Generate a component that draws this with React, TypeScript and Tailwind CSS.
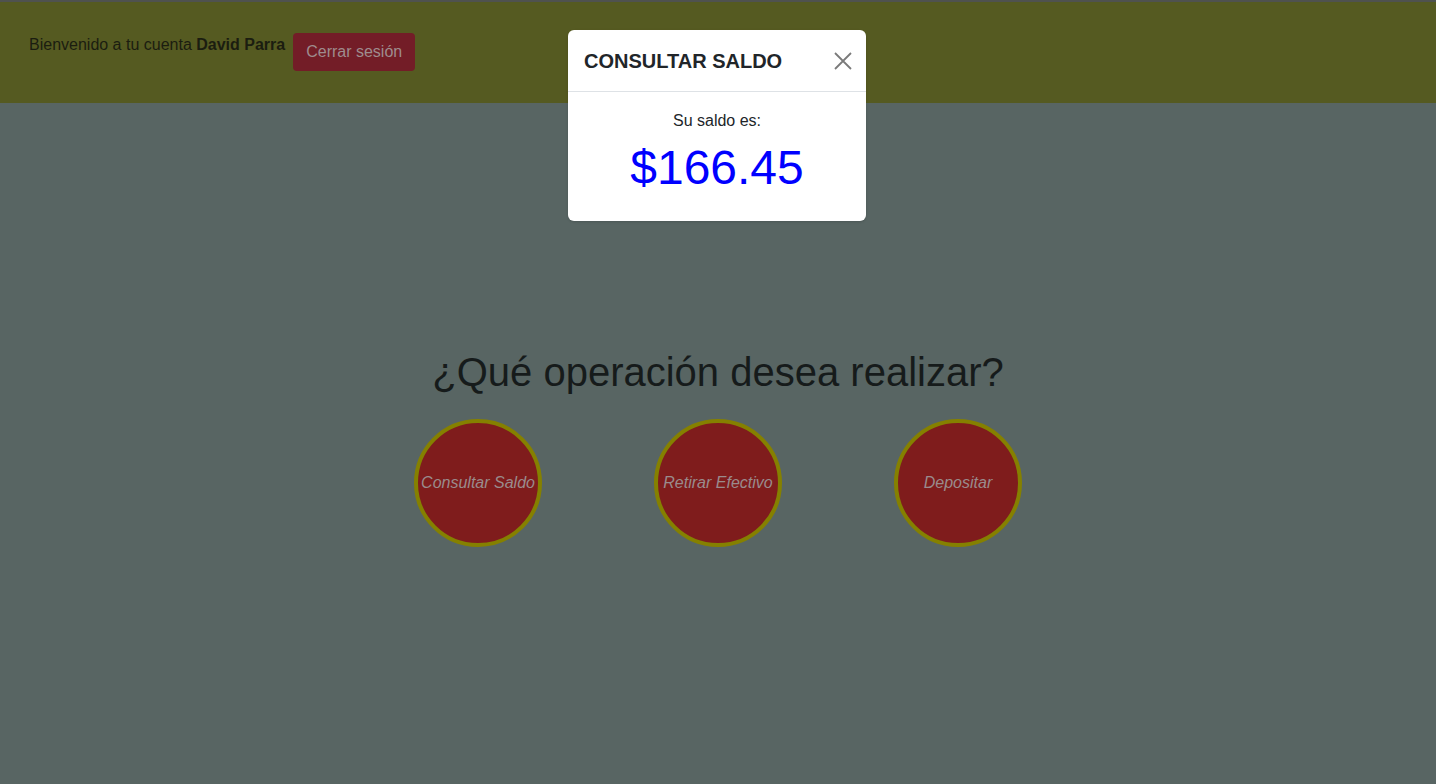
import React from "react";

export default function App() {
  const ops = ["Consultar Saldo", "Retirar Efectivo", "Depositar"];
  return (
    <div
      className="relative w-[1436px] h-[784px] overflow-hidden bg-[#586563]"
      style={{ fontFamily: '"Liberation Sans", Arial, sans-serif' }}
    >
      <div className="border-t-2 border-[#4f524f] bg-[#555a21] h-[103px] flex items-start pl-[29px] pt-[31px]">
        <span className="text-[16px] leading-[24px] text-[#1b1d10]">
          Bienvenido a tu cuenta <b>David Parra</b>
        </span>
        <button className="ml-[8px] h-[38px] px-[13px] rounded-[4px] bg-[#731d27] text-[#9f8c8e] text-[16px] leading-[24px]">
          Cerrar sesión
        </button>
      </div>

      <div className="flex flex-col items-center pt-[245px]">
        <h1 className="text-[40px] leading-[48px] text-[#161b1b]">¿Qué operación desea realizar?</h1>
        <div className="mt-[23px] flex gap-[112px]">
          {ops.map((o) => (
            <div
              key={o}
              className="w-[128px] h-[128px] rounded-full border-[4px] border-[#858000] bg-[#7f1c1c] flex items-center justify-center"
            >
              <span className="italic text-[16px] text-[#9a8b8c] whitespace-nowrap">{o}</span>
            </div>
          ))}
        </div>
      </div>

      <div className="absolute left-[568px] top-[30px] w-[298px] bg-white rounded-[6px] shadow">
        <div className="h-[62px] flex items-center justify-between pl-[16px] pr-[14px] border-b border-[#dee2e6]">
          <span className="font-bold text-[20px] text-[#212529]">CONSULTAR SALDO</span>
          <svg width="18" height="18" viewBox="0 0 18 18" className="mt-[1px]">
            <path d="M1 1 L17 17 M17 1 L1 17" stroke="#7a7a7a" strokeWidth="1.8" />
          </svg>
        </div>
        <div className="flex flex-col items-center pt-[17px] pb-[25px]">
          <span className="text-[16px] leading-[24px] text-[#212529]">Su saldo es:</span>
          <span className="text-[48px] leading-[56px] text-[#0000ff] mt-[7px]">$166.45</span>
        </div>
      </div>
    </div>
  );
}
